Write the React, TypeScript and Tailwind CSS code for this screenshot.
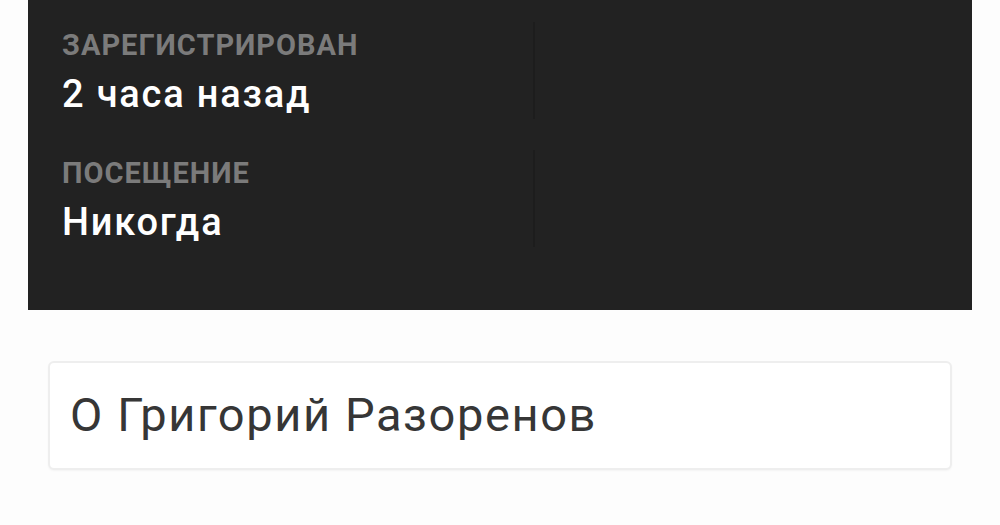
import React from "react";

const stats = [
  { label: "Зарегистрирован", value: "2 часа назад" },
  { label: "Посещение", value: "Никогда" },
];

function StatRow({ label, value }: { label: string; value: string }) {
  return (
    <div className="flex">
      <div className="w-[473px] h-[97px] border-r-2 border-[#1d1d1d] pt-[6px]">
        <div className="text-[29px] leading-[35px] font-bold uppercase text-[#7b7b7b] tracking-[1px]">
          {label}
        </div>
        <div className="text-[38px] leading-[46px] font-medium text-white mt-[8px] tracking-[1.8px]">
          {value}
        </div>
      </div>
    </div>
  );
}

export default function App() {
  return (
    <div className="w-[1000px] h-[525px] bg-[#fdfdfd] font-['Roboto',sans-serif] overflow-hidden">
      <div className="mx-[28px] bg-[#222222] h-[310px] px-[34px] pt-[22px] flex flex-col gap-[31px]">
        {stats.map((s) => (
          <StatRow key={s.label} label={s.label} value={s.value} />
        ))}
      </div>
      <div className="mx-[48px] mt-[51px] h-[109px] bg-white border-2 border-[#eeeeee] rounded-[6px] shadow-[0_1px_2px_rgba(0,0,0,0.04)] flex items-center px-[20px]">
        <h2 className="text-[47px] text-[#363636] font-normal tracking-[1.6px]">
          О Григорий Разоренов
        </h2>
      </div>
    </div>
  );
}
